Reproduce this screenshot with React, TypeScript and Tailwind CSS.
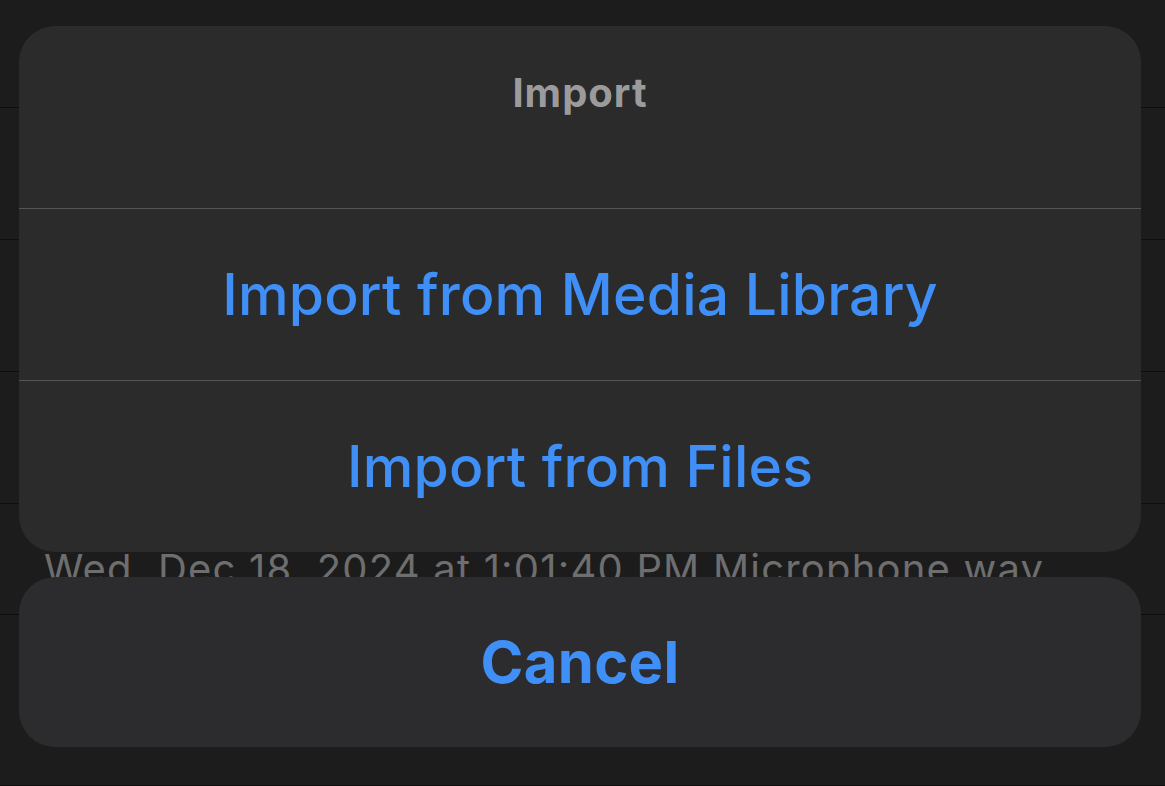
export default function App() {
  const rows = [108, 132, 132, 132, 111, 171]

  return (
    <div className="relative h-[786px] w-[1165px] overflow-hidden bg-[#1c1c1c] font-['Inter','Noto_Sans',sans-serif]">
      {/* list behind the sheet */}
      <div className="flex flex-col">
        {rows.map((h, i) => (
          <div
            key={i}
            className="relative border-b border-[#0e0e0e]"
            style={{ height: h }}
          >
            {i === 4 && (
              <p className="absolute left-[44px] top-[45px] whitespace-nowrap text-[40px] leading-none tracking-[1.2px] text-[#6e6e6e]">
                Wed, Dec 18, 2024 at 1:01:40 PM Microphone wav
              </p>
            )}
          </div>
        ))}
      </div>

      {/* action sheet */}
      <div className="absolute left-[19px] right-[24px] top-[26px] flex flex-col gap-[25px]">
        <div className="flex h-[526px] flex-col overflow-hidden rounded-[36px] bg-[#2b2b2b]">
          <div className="flex h-[183px] items-start justify-center border-b border-[#555555] pt-[47px]">
            <span className="text-[40px] font-bold leading-none tracking-[1px] text-[#9b9b9b]">Import</span>
          </div>
          <button className="flex h-[172px] items-center justify-center border-b border-[#555555] text-[57px] font-medium leading-none tracking-[0.2px] text-[#3f8ff7]">
            Import from Media Library
          </button>
          <button className="flex flex-1 items-center justify-center text-[57px] font-medium leading-none tracking-[0.2px] text-[#3f8ff7]">
            Import from Files
          </button>
        </div>
        <button className="flex h-[170px] items-center justify-center rounded-[36px] bg-[#2c2c2e] text-[58px] font-bold leading-none tracking-[0.3px] text-[#3f8ff7]">
          Cancel
        </button>
      </div>
    </div>
  )
}
